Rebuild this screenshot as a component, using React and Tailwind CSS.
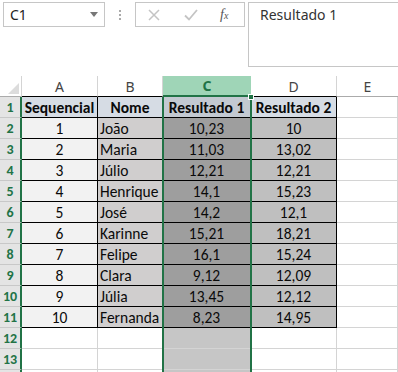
import React from "react";

const rows = [
  ["1", "João", "10,23", "10"],
  ["2", "Maria", "11,03", "13,02"],
  ["3", "Júlio", "12,21", "12,21"],
  ["4", "Henrique", "14,1", "15,23"],
  ["5", "José", "14,2", "12,1"],
  ["6", "Karinne", "15,21", "18,21"],
  ["7", "Felipe", "16,1", "15,24"],
  ["8", "Clara", "9,12", "12,09"],
  ["9", "Júlia", "13,45", "12,12"],
  ["10", "Fernanda", "8,23", "14,95"],
];

const cellFont = { fontFamily: "Calibri, Carlito, Lato, 'Noto Sans', sans-serif" };

const RowHeader = ({ n }) => (
  <div className="h-[21px] box-border border-b border-b-[#c8c8c8] border-r-2 border-r-[#217346] bg-[#e4e4e4] flex items-center justify-center text-[14px] font-bold text-[#217346]">
    {n}
  </div>
);

const Cell = ({ children, className = "", table = true }) => (
  <div
    className={`h-[21px] box-border border-r border-b flex items-center pt-[1px] text-[15.5px] text-[#0a0a0a] overflow-hidden whitespace-nowrap ${
      table ? "border-black" : "border-[#d4d4d4]"
    } ${className}`}
  >
    {children}
  </div>
);

const App = () => {
  return (
    <div className="w-[398px] h-[372px] overflow-hidden bg-white relative">
      {/* formula bar */}
      <div className="h-[76px] flex items-start pt-[2px]" style={{ fontFamily: "'Noto Sans', 'Open Sans', sans-serif" }}>
        <div className="ml-[3px] w-[102px] h-[25px] border border-[#c6c6c6] flex items-center justify-between px-[6px] text-[14px] text-[#222]">
          <span>C1</span>
          <svg width="8" height="5" viewBox="0 0 8 5">
            <path d="M0 0 L8 0 L4 5 Z" fill="#777" />
          </svg>
        </div>
        <div className="w-[30px] h-[25px] flex flex-col items-center justify-center gap-[2px]">
          <span className="w-[2px] h-[2px] bg-[#aaa]" />
          <span className="w-[2px] h-[2px] bg-[#aaa]" />
          <span className="w-[2px] h-[2px] bg-[#aaa]" />
        </div>
        <div className="w-[110px] h-[25px] border border-[#c6c6c6] flex items-center">
          <svg className="ml-[12px]" width="12" height="12" viewBox="0 0 12 12">
            <path d="M1 1 L11 11 M11 1 L1 11" stroke="#c4c4c4" strokeWidth="1.5" />
          </svg>
          <svg className="ml-[24px]" width="14" height="12" viewBox="0 0 14 12">
            <path d="M1 6.5 L5 10.5 L13 1" stroke="#c4c4c4" strokeWidth="1.8" fill="none" />
          </svg>
          <span className="ml-[22px] text-[14px] italic text-[#555]" style={{ fontFamily: "'Liberation Serif', serif" }}>
            f<span className="text-[10px]">x</span>
          </span>
        </div>
        <div className="ml-[3px] flex-1 h-[65px] border border-r-0 border-[#c6c6c6] pl-[11px] pt-[1px] text-[14px] text-[#333]">
          Resultado 1
        </div>
      </div>

      {/* grid */}
      <div className="grid grid-cols-[22px_76px_65px_88px_86px_61px]" style={cellFont}>
        {/* column headers */}
        <div className="h-[21px] box-border border-b border-b-[#ababab] border-r border-r-[#d4d4d4] bg-white relative">
          <svg className="absolute right-[2px] bottom-[2px]" width="11" height="11" viewBox="0 0 11 11">
            <path d="M11 0 L11 11 L0 11 Z" fill="#dcdcdc" />
          </svg>
        </div>
        {["A", "B"].map((l) => (
          <div key={l} className="h-[21px] box-border border-b border-b-black border-r border-r-[#d4d4d4] bg-white flex items-center justify-center text-[14px] text-[#444]" style={{ fontFamily: "'Noto Sans', sans-serif" }}>
            {l}
          </div>
        ))}
        <div className="h-[21px] box-border border-b-2 border-b-[#217346] bg-[#9fd5b7] flex items-center justify-center text-[14px] font-bold text-[#217346]" style={{ fontFamily: "'Noto Sans', sans-serif" }}>
          C
        </div>
        <div className="h-[21px] box-border border-b border-b-black border-r border-r-[#d4d4d4] bg-white flex items-center justify-center text-[14px] text-[#444]" style={{ fontFamily: "'Noto Sans', sans-serif" }}>
          D
        </div>
        <div className="h-[21px] box-border border-b border-b-[#ababab] bg-white flex items-center justify-center text-[14px] text-[#444]" style={{ fontFamily: "'Noto Sans', sans-serif" }}>
          E
        </div>

        {/* row 1 */}
        <RowHeader n="1" />
        <Cell className="bg-[#d6dce4] justify-center font-bold">Sequencial</Cell>
        <Cell className="bg-[#d6dce4] justify-center font-bold">Nome</Cell>
        <Cell className="bg-[#c3c9d1] justify-center font-bold">Resultado 1</Cell>
        <Cell className="bg-[#d6dce4] justify-center font-bold">Resultado 2</Cell>
        <Cell table={false} />

        {rows.map((r, i) => (
          <React.Fragment key={i}>
            <RowHeader n={String(i + 2)} />
            <Cell className="bg-[#f2f2f2] justify-center">{r[0]}</Cell>
            <Cell className="bg-[#d0cece] pl-[2px]">{r[1]}</Cell>
            <Cell className="bg-[#9e9e9e] justify-center">{r[2]}</Cell>
            <Cell className="bg-[#bfbfbf] justify-center">{r[3]}</Cell>
            <Cell table={false} />
          </React.Fragment>
        ))}

        {["12", "13", ""].map((n, i) => (
          <React.Fragment key={i}>
            <RowHeader n={n} />
            <Cell table={false} />
            <Cell table={false} />
            <Cell table={false} className="bg-[#c6c6c6]" />
            <Cell table={false} />
            <Cell table={false} />
          </React.Fragment>
        ))}
      </div>

      {/* column C selection */}
      <div className="absolute left-[162px] top-[97px] w-[90px] h-[300px] border-l-2 border-r-2 border-[#217346] pointer-events-none" />
      <div className="absolute left-[248px] top-[94px] w-[6px] h-[6px] bg-[#217346] border border-white" />
    </div>
  );
};

export default App;
